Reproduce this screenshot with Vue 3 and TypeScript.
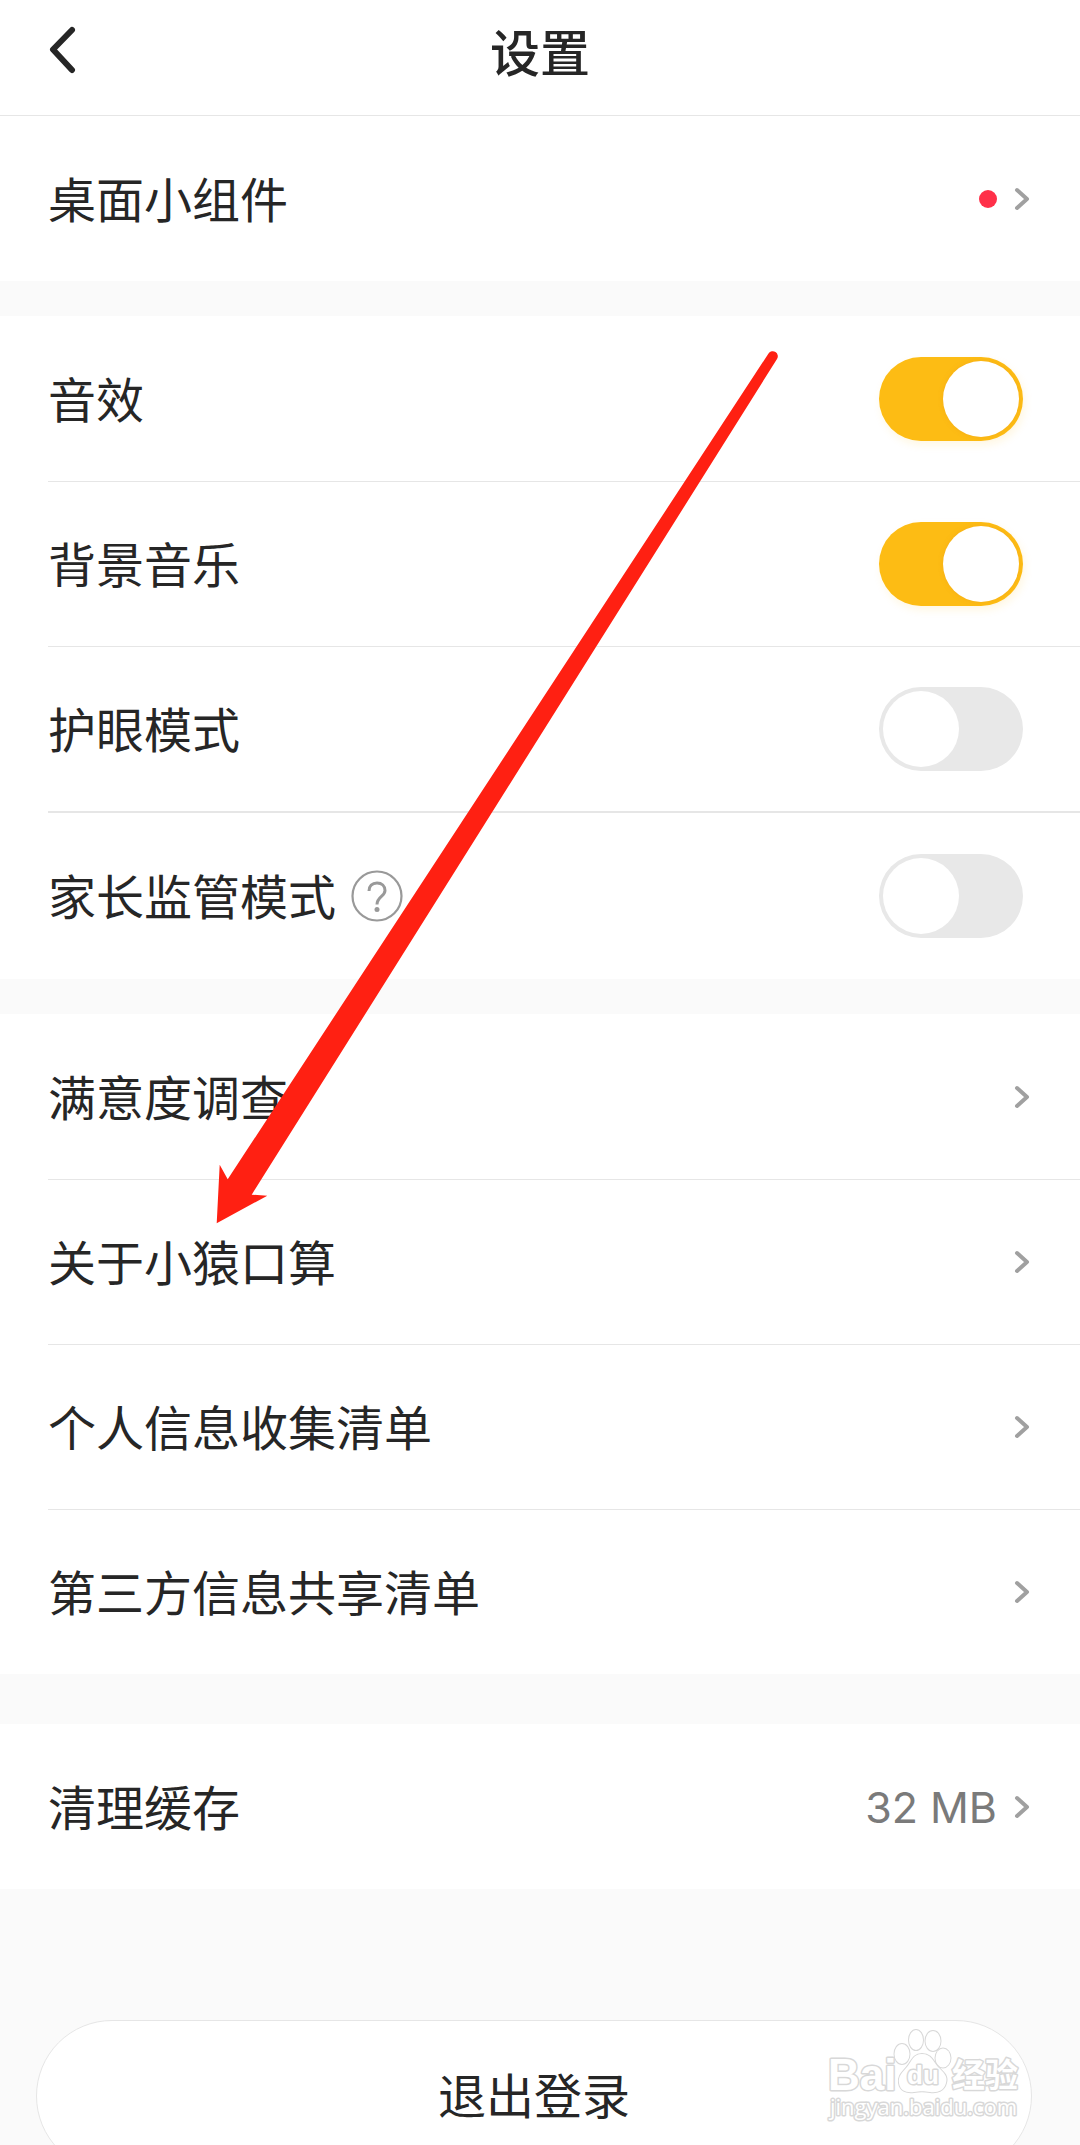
<script setup lang="ts">
import { ref } from 'vue'

interface SwitchRow {
  id: string
  label: string
  on: boolean
  help?: boolean
}

const switches = ref<SwitchRow[]>([
  { id: 'sound', label: '音效', on: true },
  { id: 'music', label: '背景音乐', on: true },
  { id: 'eye-care', label: '护眼模式', on: false },
  { id: 'parental', label: '家长监管模式', on: false, help: true },
])

const links: string[] = ['满意度调查', '关于小猿口算', '个人信息收集清单', '第三方信息共享清单']
</script>

<template>
  <div class="page">
    <header class="header">
      <button class="back" type="button" aria-label="返回">
        <svg width="28" height="48" viewBox="0 0 28 48" fill="none" stroke="#262626" stroke-width="6" stroke-linecap="round" stroke-linejoin="round">
          <path d="M24 4 5 23.500 24 44" />
        </svg>
      </button>
      <h1 class="title">设置</h1>
    </header>

    <main>
      <section class="group">
        <a class="row" href="#">
          <span class="label">桌面小组件</span>
          <span class="dot"></span>
          <svg class="chevron" viewBox="0 0 16 24"><path d="M3 3l10 9L3 21" /></svg>
        </a>
      </section>

      <section class="group">
        <div v-for="item in switches" :key="item.id" class="row" :class="{ guarded: item.help }">
          <label class="label" :for="item.id">{{ item.label }}</label>
          <button v-if="item.help" class="help" type="button" aria-label="说明">
            <svg width="52" height="52" viewBox="0 0 52 52" fill="none" stroke="#999" stroke-width="2.200">
              <circle cx="26" cy="26" r="24.500" />
              <path d="M18 21c0-5 3.200-8 8-8s8 3 8 7.500c0 6-8 6-8 14" stroke-width="3" />
              <circle cx="26" cy="39.500" r="2.500" fill="#999" stroke="none" />
            </svg>
          </button>
          <input :id="item.id" v-model="item.on" class="switch" type="checkbox" />
        </div>
      </section>

      <section class="group">
        <a v-for="text in links" :key="text" class="row" href="#">
          <span class="label">{{ text }}</span>
          <svg class="chevron" viewBox="0 0 16 24"><path d="M3 3l10 9L3 21" /></svg>
        </a>
      </section>

      <section class="group spaced">
        <a class="row" href="#">
          <span class="label">清理缓存</span>
          <span class="value">32 MB</span>
          <svg class="chevron" viewBox="0 0 16 24"><path d="M3 3l10 9L3 21" /></svg>
        </a>
      </section>
    </main>

    <footer class="footer">
      <button class="logout" type="button">退出登录</button>
      <svg class="watermark" width="204" height="100" viewBox="0 0 204 100">
        <text class="brand" x="4" y="64">Bai</text>
        <g class="paw">
          <ellipse cx="78" cy="28" rx="7.500" ry="10" />
          <ellipse cx="92" cy="14" rx="7" ry="10" />
          <ellipse cx="109" cy="15" rx="7.500" ry="10" />
          <ellipse cx="119" cy="32" rx="7.500" ry="9.500" />
          <path d="M98 28c9 0 11 7 16 13 6 6 10 9 8 16-2 8-9 10-16 9-6-1-10-1-16 0-7 1-14-1-15-9-1-7 3-10 8-16s6-13 15-13z" />
        </g>
        <text class="du" x="83" y="58">du</text>
        <text class="cjk" x="128" y="61">经验</text>
        <text class="site" x="6" y="89">jingyan.baidu.com</text>
      </svg>
    </footer>

    <svg class="arrow" width="570" height="880" viewBox="0 0 570 880">
      <path d="M6.700 873.300 9.700 814.700 17.700 829.300 558.500 3.500a5 5 0 0 1 8.500 5.500L41.700 844.700 57.300 845.700z" fill="#ff2012" />
    </svg>
  </div>
</template>

<style>
body {
  margin: 0;
  background: #fafafa;
}
</style>

<style scoped>
.page {
  position: relative;
  display: flex;
  flex-direction: column;
  height: 100vh;
  overflow: hidden;
  background: #fafafa;
  color: #262626;
  font-family: "Noto Sans CJK SC", sans-serif;
}

button {
  padding: 0;
  border: 0;
  background: none;
  color: inherit;
  font-family: inherit;
}

svg {
  display: block;
}

.header {
  display: grid;
  grid-template-columns: 1fr auto 1fr;
  flex-shrink: 0;
  align-items: center;
  box-sizing: border-box;
  height: 116px;
  padding: 0 48px 16px;
  border-bottom: 1px solid #e6e6e6;
  background: #fff;
}

.back {
  justify-self: start;
}

.title {
  margin: 0;
  font-size: 50px;
  font-weight: 500;
  line-height: 72px;
}

.group {
  margin-bottom: 35px;
  padding-left: 48px;
  background: #fff;
}

.group.spaced {
  margin-top: 50px;
  margin-bottom: 0;
}

.row {
  display: flex;
  align-items: center;
  box-sizing: border-box;
  height: 165px;
  padding-right: 50px;
  color: inherit;
  text-decoration: none;
}

.row + .row {
  border-top: 1px solid #e6e6e6;
}

.row.guarded {
  height: 168px;
  border-top-width: 2px;
}

.label {
  padding-bottom: 4px;
  font-size: 48px;
  line-height: 72px;
}

.dot {
  width: 18px;
  height: 18px;
  margin-left: auto;
  border-radius: 50%;
  background: #ff3049;
}

.chevron {
  width: 16px;
  height: 24px;
  margin-left: auto;
  fill: none;
  stroke: #a0a0a0;
  stroke-width: 4;
  stroke-linecap: round;
  stroke-linejoin: round;
}

.dot + .chevron,
.value + .chevron {
  margin-left: 17px;
}

.help {
  margin-left: 15px;
}

.switch {
  appearance: none;
  position: relative;
  width: 144px;
  height: 84px;
  margin: 0 7px 0 auto;
  border-radius: 42px;
  background: #e8e8e8;
}

.switch::before {
  content: "";
  position: absolute;
  top: 4px;
  left: 4px;
  width: 76px;
  height: 76px;
  border-radius: 50%;
  background: #fff;
}

.switch:checked {
  background: #fdbc14;
  box-shadow: 2px 4px 8px rgba(253, 188, 20, 0.12);
}

.switch:checked::before {
  right: 4px;
  left: auto;
  box-shadow: 0 0 4px rgba(240, 160, 30, 0.5);
}

.value {
  margin-left: auto;
  color: #7a7a7a;
  font-family: Inter, sans-serif;
  font-size: 43px;
  line-height: 72px;
}

.footer {
  position: relative;
  flex: 1;
  min-height: 0;
  padding: 131px 48px 0 36px;
}

.logout {
  width: 100%;
  height: 152px;
  padding-bottom: 6px;
  border: 1px solid #e6e6e6;
  border-radius: 76px;
  background: #fff;
  font-size: 48px;
}

.watermark {
  position: absolute;
  top: 137px;
  right: 52px;
  fill: #fff;
  stroke: #d8d8d8;
  stroke-width: 3;
  stroke-linejoin: round;
  paint-order: stroke;
}

.brand {
  font: bold 44px "Liberation Sans", sans-serif;
}

.paw {
  stroke-width: 2;
}

.du {
  font: bold 26px "Liberation Sans", sans-serif;
}

.cjk {
  font: bold 33px "Noto Sans CJK SC", sans-serif;
}

.site {
  font: 22px "Open Sans", sans-serif;
}

.arrow {
  position: absolute;
  top: 350px;
  left: 210px;
  pointer-events: none;
}
</style>
